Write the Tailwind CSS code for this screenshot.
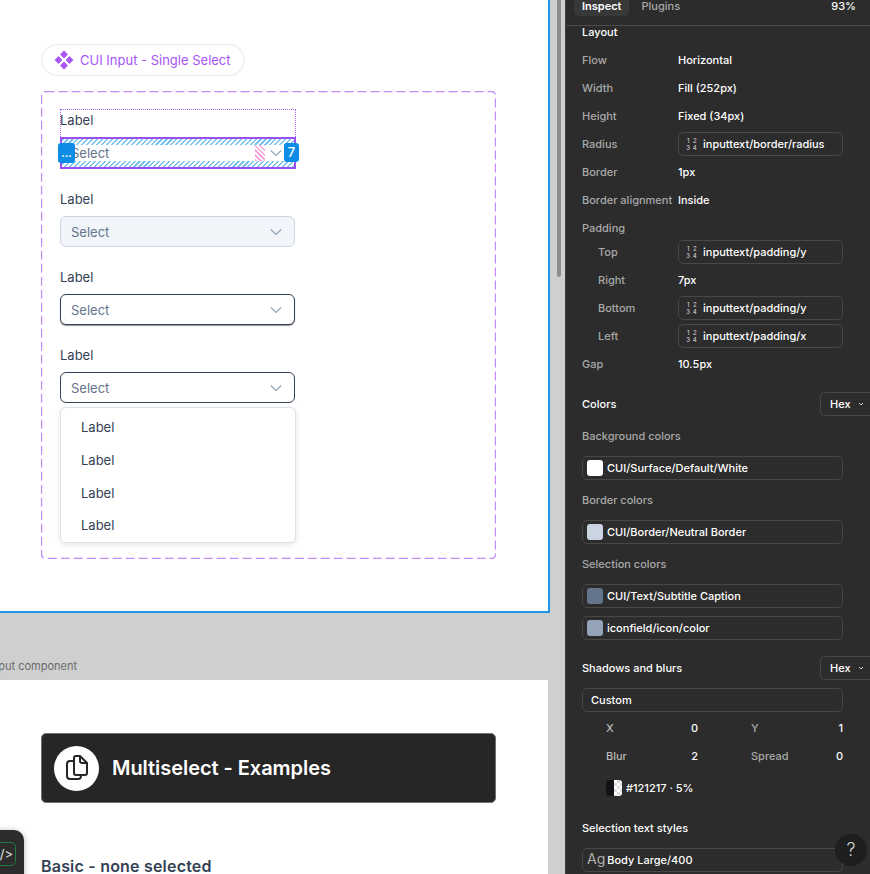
<!DOCTYPE html>
<html lang="en">
<head>
<meta charset="utf-8">
<title>CUI Input</title>
<script src="https://cdn.jsdelivr.net/npm/@tailwindcss/browser@4"></script>
</head>
<body class="m-0 overflow-hidden bg-[#cfcfcf] font-[Inter,sans-serif]">
<div class="relative flex h-[874px] w-[870px] overflow-hidden">
  <main class="relative h-full w-[565px] shrink-0 overflow-hidden bg-[#cfcfcf]">
    <section class="-ml-[10px] -mt-[10px] h-[623px] w-[560px] border-2 border-[#2196e8] bg-white pl-[49px] pt-[52px]">
      <div class="flex h-[32px] w-[204px] items-center rounded-full border border-[#e2e8f0] pl-[12px]">
        <svg class="h-[20px] w-[20px] shrink-0" viewBox="0 0 20 20" fill="#a855f7"><path d="M10 .6 13.9 4.5 10 8.4 6.1 4.5zM15.5 6.1 19.4 10 15.5 13.9 11.6 10zM4.5 6.1 8.4 10 4.5 13.9.6 10zM10 11.6 13.9 15.5 10 19.4 6.1 15.5z"/></svg>
        <span class="ml-[6px] whitespace-nowrap text-[13px] leading-5 text-[#a855f7]">CUI Input - Single Select</span>
      </div>
      <div class="relative mt-[15px] h-[468px] w-[455px] pl-[19px] pt-[18px]">
        <svg class="absolute inset-0 h-full w-full" fill="none"><rect x=".5" y=".5" width="454" height="467" rx="4" stroke="#c08cfa" stroke-width="1.4" stroke-dasharray="9 4"/></svg>
        <div class="relative flex w-[236px] flex-col gap-[20px]">
          <div class="relative h-[60px] w-[236px] border border-dotted border-[#a96df5]">
            <div class="-ml-[1px] h-[27px] text-[13px] leading-5 text-[#334155]">Label</div>
            <div class="relative -ml-[1px] h-[32px] w-[236px] border-2 border-[#9a4ff0] bg-[repeating-linear-gradient(135deg,#7cc4f2_0,#7cc4f2_1.5px,#fff_1.5px,#fff_3.5px)]">
              <div class="mt-[6px] flex h-[16px] items-center bg-white pl-[9px] pr-[12px]">
                <span class="text-[13px] leading-5 text-[#64748b]">Select</span>
                <span class="ml-auto h-[16px] w-[10px] bg-[repeating-linear-gradient(45deg,#f7a8dc_0,#f7a8dc_1.5px,#fff_1.5px,#fff_3.5px)]"></span>
                <svg class="ml-[5px] h-[12px] w-[12px]" viewBox="0 0 12 12" fill="none" stroke="#94a3b8" stroke-width="1.2"><path d="M.8 3.5 6 8.5 11.2 3.5"/></svg>
              </div>
              <span class="absolute -left-[4px] top-[4px] flex h-[20px] w-[17px] items-center justify-center rounded-[3px] bg-[#0d8ce6] text-[11px] font-semibold leading-none text-white">...</span>
              <span class="absolute -right-[5px] top-[4px] flex h-[19px] w-[15px] items-center justify-center rounded-[3px] bg-[#0d8ce6] text-[13px] font-medium leading-none text-white">7</span>
            </div>
          </div>
          <div class="w-[235px]">
            <div class="h-[20px] text-[13px] leading-5 text-[#334155]">Label</div>
            <div class="mt-[7px] flex h-[31px] items-center justify-between rounded-[6px] border border-[#cbd5e1] bg-[#f1f5f9] pl-[10px] pr-[12px]">
              <span class="text-[13px] leading-5 text-[#64748b]">Select</span>
              <svg class="h-[12px] w-[12px]" viewBox="0 0 12 12" fill="none" stroke="#94a3b8" stroke-width="1.2"><path d="M.8 3.5 6 8.5 11.2 3.5"/></svg>
            </div>
          </div>
          <div class="w-[235px]">
            <div class="h-[20px] text-[13px] leading-5 text-[#334155]">Label</div>
            <div class="mt-[7px] flex h-[31px] items-center justify-between rounded-[6px] border border-[#334155] bg-white pl-[10px] pr-[12px] shadow-[0_1px_1px_rgba(18,18,23,0.45)]">
              <span class="text-[13px] leading-5 text-[#64748b]">Select</span>
              <svg class="h-[12px] w-[12px]" viewBox="0 0 12 12" fill="none" stroke="#94a3b8" stroke-width="1.2"><path d="M.8 3.5 6 8.5 11.2 3.5"/></svg>
            </div>
          </div>
          <div class="w-[236px]">
            <div class="h-[20px] text-[13px] leading-5 text-[#334155]">Label</div>
            <div class="mt-[7px] flex h-[31px] w-[235px] items-center justify-between rounded-[6px] border border-[#334155] bg-white pl-[10px] pr-[12px]">
              <span class="text-[13px] leading-5 text-[#64748b]">Select</span>
              <svg class="h-[12px] w-[12px]" viewBox="0 0 12 12" fill="none" stroke="#94a3b8" stroke-width="1.2"><path d="M.8 3.5 6 8.5 11.2 3.5"/></svg>
            </div>
            <div class="mt-[4px] h-[136px] rounded-[6px] border border-[#dde2ea] bg-white pl-[20px] pt-[3px] shadow-[0_2px_6px_rgba(18,18,23,0.1)]">
              <div class="flex h-[33px] items-center text-[13px] text-[#334155]">Label</div>
              <div class="flex h-[33px] items-center text-[13px] text-[#334155]">Label</div>
              <div class="flex h-[33px] items-center text-[13px] text-[#334155]">Label</div>
              <div class="flex h-[32px] items-center text-[13px] text-[#334155]">Label</div>
            </div>
          </div>
        </div>
      </div>
    </section>
    <div class="mt-[45px] flex h-[16px] w-[77px] justify-end overflow-hidden whitespace-nowrap text-[11px] leading-4 text-[#6b6b6b]">Input component</div>
    <section class="mt-[6px] h-[194px] w-[548px] overflow-hidden bg-white pl-[41px] pt-[53px]">
      <div class="flex h-[70px] w-[455px] items-center rounded-[5px] border border-[#6f6f6f] bg-[#262626] pl-[12px]">
        <div class="flex h-[45px] w-[45px] items-center justify-center rounded-full bg-white">
          <svg class="h-[26px] w-[22px]" viewBox="0 0 22 26" fill="none" stroke="#262626" stroke-width="2" stroke-linejoin="round"><path d="M8 3a2 2 0 0 1 2-2h4l7 7v10a2 2 0 0 1-2 2h-9a2 2 0 0 1-2-2z"/><path d="M14 1v5a2 2 0 0 0 2 2h5"/><path d="M8 6H4a3 3 0 0 0-3 3v12a3 3 0 0 0 3 3h8a3 3 0 0 0 3-3v-1"/></svg>
        </div>
        <span class="ml-[13px] whitespace-nowrap text-[20px] font-semibold leading-7 tracking-[-0.05px] text-white">Multiselect - Examples</span>
      </div>
      <h2 class="mt-[51px] text-[16px] font-semibold leading-6 tracking-[0.2px] text-[#334155]">Basic - none selected</h2>
    </section>
    <div class="absolute left-[557px] top-0 h-[277px] w-[4px] rounded-b-full bg-[#8e8e8e]"></div>
    <div class="absolute -left-[20px] top-[830px] flex h-[60px] w-[44px] items-start justify-end rounded-[10px] bg-[#2c2c2c] pr-[8px] pt-[12px] shadow-[0_1px_6px_rgba(0,0,0,0.3)]">
      <div class="flex h-[24px] w-[30px] items-center justify-end rounded-[5px] border border-[#1f7a45] pr-[2px] text-[13px] leading-none text-[#e5e5e5]">/&gt;</div>
    </div>
  </main>

  <aside class="h-full w-[305px] shrink-0 overflow-hidden border-l border-[#3c3c3c] bg-[#2c2c2c] text-[11px] font-medium leading-4 text-white">
    <div class="relative flex h-[26px] items-start border-b border-[#4a4a4a] pl-[8px] pr-[14px]">
      <div class="flex h-[16px] items-center rounded-b-[5px] bg-[#383838] px-[8px] pb-[5px] font-semibold">Inspect</div>
      <div class="ml-[12px] flex h-[11px] items-center text-[#a8a8a8]">Plugins</div>
      <div class="ml-auto flex h-[11px] items-center">93%</div>
    </div>
    <div class="pl-[16px] pr-[27px]">
      <div class="flex h-[12px] items-center">Layout</div>
      <div class="mt-[8px] flex h-7 items-center"><span class="w-[96px] text-[#a8a8a8]">Flow</span><span>Horizontal</span></div>
      <div class="flex h-7 items-center"><span class="w-[96px] text-[#a8a8a8]">Width</span><span>Fill (252px)</span></div>
      <div class="flex h-7 items-center"><span class="w-[96px] text-[#a8a8a8]">Height</span><span>Fixed (34px)</span></div>
      <div class="flex h-7 items-center"><span class="w-[96px] text-[#a8a8a8]">Radius</span>
        <span class="flex h-[24px] flex-1 items-center rounded-[5px] border border-[#474747] pl-[6px]">
          <span class="grid w-[13px] grid-cols-2 text-center text-[6px] leading-[7px] text-[#cfcfcf]"><span>1</span><span>2</span><span>3</span><span>4</span></span><span class="ml-[5px]">inputtext/border/radius</span>
        </span>
      </div>
      <div class="flex h-7 items-center"><span class="w-[96px] text-[#a8a8a8]">Border</span><span>1px</span></div>
      <div class="flex h-7 items-center"><span class="w-[96px] whitespace-nowrap text-[#a8a8a8]">Border alignment</span><span>Inside</span></div>
      <div class="mt-[4px] flex h-[20px] items-center text-[#a8a8a8]">Padding</div>
      <div class="flex h-7 items-center"><span class="ml-[16px] w-[80px] text-[#a8a8a8]">Top</span>
        <span class="flex h-[24px] flex-1 items-center rounded-[5px] border border-[#474747] pl-[6px]">
          <span class="grid w-[13px] grid-cols-2 text-center text-[6px] leading-[7px] text-[#cfcfcf]"><span>1</span><span>2</span><span>3</span><span>4</span></span><span class="ml-[5px]">inputtext/padding/y</span>
        </span>
      </div>
      <div class="flex h-7 items-center"><span class="ml-[16px] w-[80px] text-[#a8a8a8]">Right</span><span>7px</span></div>
      <div class="flex h-7 items-center"><span class="ml-[16px] w-[80px] text-[#a8a8a8]">Bottom</span>
        <span class="flex h-[24px] flex-1 items-center rounded-[5px] border border-[#474747] pl-[6px]">
          <span class="grid w-[13px] grid-cols-2 text-center text-[6px] leading-[7px] text-[#cfcfcf]"><span>1</span><span>2</span><span>3</span><span>4</span></span><span class="ml-[5px]">inputtext/padding/y</span>
        </span>
      </div>
      <div class="flex h-7 items-center"><span class="ml-[16px] w-[80px] text-[#a8a8a8]">Left</span>
        <span class="flex h-[24px] flex-1 items-center rounded-[5px] border border-[#474747] pl-[6px]">
          <span class="grid w-[13px] grid-cols-2 text-center text-[6px] leading-[7px] text-[#cfcfcf]"><span>1</span><span>2</span><span>3</span><span>4</span></span><span class="ml-[5px]">inputtext/padding/x</span>
        </span>
      </div>
      <div class="flex h-7 items-center"><span class="w-[96px] text-[#a8a8a8]">Gap</span><span>10.5px</span></div>

      <div class="mt-[14px] flex h-[24px] items-center"><span>Colors</span>
        <span class="-mr-[37px] ml-auto flex h-[24px] w-[60px] shrink-0 items-center rounded-[5px] border border-[#474747] pl-[9px]">Hex<svg class="ml-[7px] h-[6px] w-[6px]" viewBox="0 0 6 6" fill="none" stroke="#d0d0d0"><path d="M1 2 3 4 5 2"/></svg></span>
      </div>
      <div class="mt-[12px] h-[16px] text-[#a8a8a8]">Background colors</div>
      <div class="mt-[12px] flex h-[24px] items-center rounded-[5px] border border-[#474747] pl-[4px]"><span class="h-[16px] w-[16px] rounded-[3px] bg-white"></span><span class="ml-[4px]">CUI/Surface/Default/White</span></div>
      <div class="mt-[12px] h-[16px] text-[#a8a8a8]">Border colors</div>
      <div class="mt-[12px] flex h-[24px] items-center rounded-[5px] border border-[#474747] pl-[4px]"><span class="h-[16px] w-[16px] rounded-[3px] bg-[#cbd5e1]"></span><span class="ml-[4px]">CUI/Border/Neutral Border</span></div>
      <div class="mt-[12px] h-[16px] text-[#a8a8a8]">Selection colors</div>
      <div class="mt-[12px] flex h-[24px] items-center rounded-[5px] border border-[#474747] pl-[4px]"><span class="h-[16px] w-[16px] rounded-[3px] bg-[#64748b]"></span><span class="ml-[4px]">CUI/Text/Subtitle Caption</span></div>
      <div class="mt-[8px] flex h-[24px] items-center rounded-[5px] border border-[#474747] pl-[4px]"><span class="h-[16px] w-[16px] rounded-[3px] bg-[#94a3b8]"></span><span class="ml-[4px]">iconfield/icon/color</span></div>

      <div class="mt-[16px] flex h-[24px] items-center"><span>Shadows and blurs</span>
        <span class="-mr-[37px] ml-auto flex h-[24px] w-[60px] shrink-0 items-center rounded-[5px] border border-[#474747] pl-[9px]">Hex<svg class="ml-[7px] h-[6px] w-[6px]" viewBox="0 0 6 6" fill="none" stroke="#d0d0d0"><path d="M1 2 3 4 5 2"/></svg></span>
      </div>
      <div class="mt-[8px] flex h-[24px] items-center rounded-[5px] border border-[#474747] pl-[8px]">Custom</div>
      <div class="mt-[2px] flex h-7 items-center pl-[24px]"><span class="flex w-[92px] justify-between"><span class="text-[#b8b8b8]">X</span><span>0</span></span><span class="ml-[53px] flex w-[92px] justify-between"><span class="text-[#a8a8a8]">Y</span><span>1</span></span></div>
      <div class="flex h-7 items-center pl-[24px]"><span class="flex w-[92px] justify-between"><span class="text-[#b8b8b8]">Blur</span><span>2</span></span><span class="ml-[53px] flex w-[92px] justify-between"><span class="text-[#a8a8a8]">Spread</span><span>0</span></span></div>
      <div class="mt-[10px] flex h-[16px] items-center pl-[24px]">
        <span class="flex h-[16px] w-[16px] overflow-hidden rounded-[3px]"><span class="h-full w-[8px] bg-[#121217]"></span><span class="h-full w-[8px] bg-[repeating-conic-gradient(#dcdcdc_0_25%,#fff_0_50%)] bg-[length:6px_6px]"></span></span>
        <span class="ml-[4px]">#121217 · 5%</span>
      </div>
      <div class="mt-[24px] h-[16px]">Selection text styles</div>
      <div class="mt-[12px] flex h-[24px] items-center rounded-[5px] border border-[#474747] pl-[4px]"><span class="-mt-[2px] text-[14px] font-normal leading-none text-[#b0b0b0]">Ag</span><span class="ml-[2px]">Body Large/400</span></div>
    </div>
    <div class="absolute left-[835px] top-[834px] flex h-[32px] w-[32px] items-center justify-center rounded-full bg-[#1e1e1e] text-[18px] font-light text-[#d8d8d8]">?</div>
  </aside>
</div>
</body>
</html>
